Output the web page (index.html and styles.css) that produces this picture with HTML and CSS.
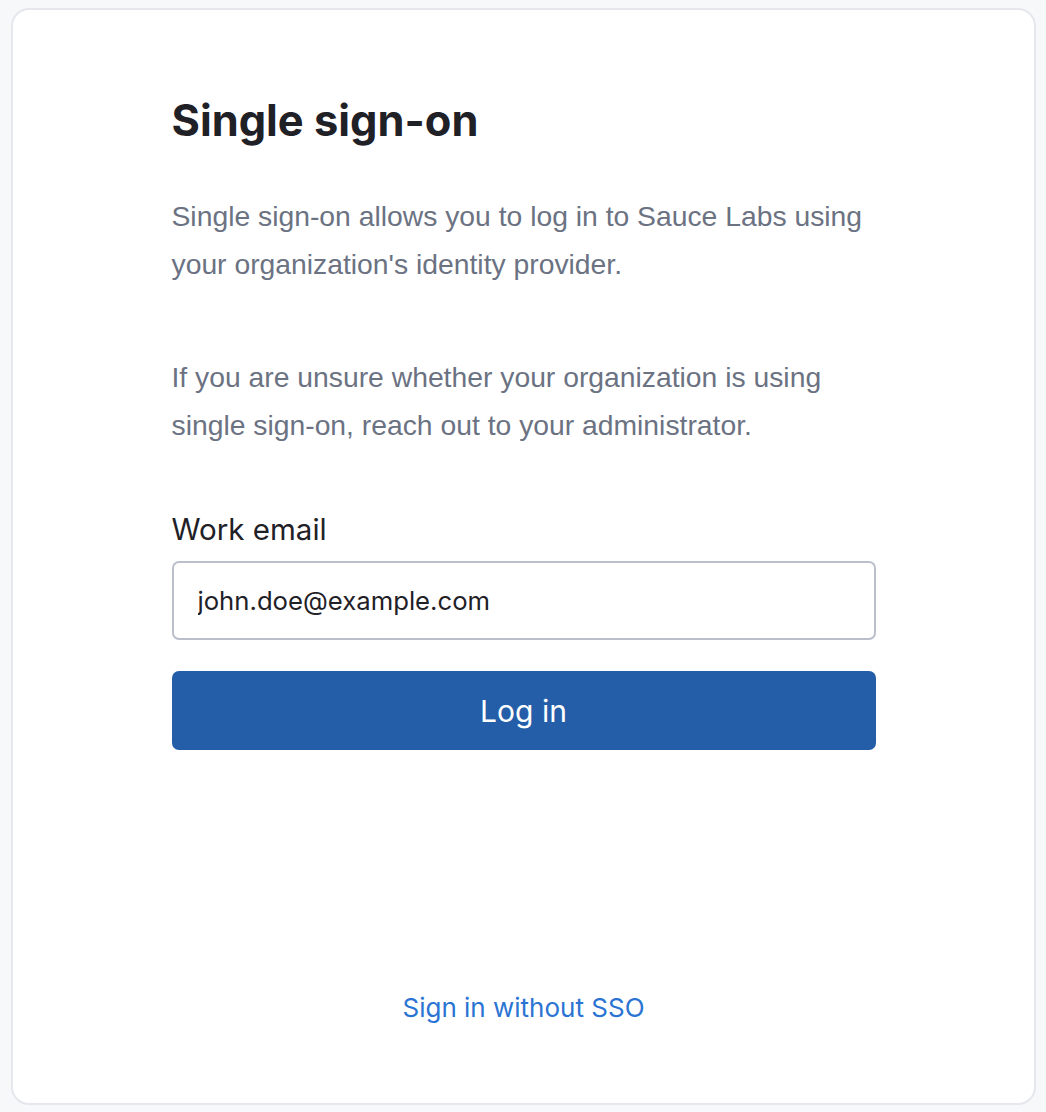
FILE: index.html
```html
<!DOCTYPE html>
<html>
<head>
<meta charset="utf-8">
<link rel="stylesheet" href="styles.css">
</head>
<body>
<main class="card">
  <div class="content">
    <h1 class="title">Single sign-on</h1>
    <p class="desc">Single sign-on allows you to log in to Sauce Labs using your organization's identity provider.</p>
    <p class="desc desc-second">If you are unsure whether your organization is using single sign-on, reach out to your administrator.</p>
    <form class="form">
      <label class="label" for="email">Work email</label>
      <input class="input" id="email" type="text" value="john.doe@example.com">
      <button class="button" type="button">Log in</button>
    </form>
  </div>
  <div class="footer">
    <a class="link" href="#">Sign in without SSO</a>
  </div>
</main>
</body>
</html>
```
FILE: styles.css
```css
html, body {
  margin: 0;
  padding: 0;
}
body {
  background: #f7f8fa;
  padding: 8px 10px 7px 11px;
  box-sizing: border-box;
  height: 1112px;
}
.card {
  box-sizing: border-box;
  height: 1097px;
  background: #ffffff;
  border: 2px solid #e6e7ec;
  border-radius: 18px;
  display: flex;
  flex-direction: column;
  align-items: center;
}
.content {
  width: 704px;
  padding-top: 84px;
}
.title {
  margin: 0;
  font-family: "Inter", "Lato", sans-serif;
  font-weight: 700;
  font-size: 43.4px;
  line-height: 52px;
  color: #1f2127;
}
.desc {
  margin: 46px 0 0;
  font-family: "Liberation Sans", Arial, sans-serif;
  font-size: 28.3px;
  line-height: 48px;
  color: #6b7282;
}
.desc-second {
  margin-top: 65px;
}
.form {
  margin-top: 62px;
  display: flex;
  flex-direction: column;
}
.label {
  font-family: "Inter", "Lato", sans-serif;
  font-size: 29.5px;
  line-height: 36px;
  color: #1f2127;
}
.input {
  margin-top: 14px;
  box-sizing: border-box;
  height: 79px;
  width: 100%;
  border: 2px solid #b9c0cc;
  border-radius: 7px;
  padding: 0 24px;
  font-family: "Inter", "Lato", sans-serif;
  font-size: 25.7px;
  color: #1f2127;
  background: #fff;
  outline: none;
}
.button {
  margin-top: 31px;
  height: 79px;
  width: 100%;
  border: none;
  border-radius: 7px;
  background: #245ea8;
  color: #ffffff;
  font-family: "Inter", "Lato", sans-serif;
  font-size: 30px;
  cursor: pointer;
}
.footer {
  margin-top: auto;
  padding-bottom: 80px;
}
.link {
  font-family: "Inter", "Lato", sans-serif;
  font-size: 26px;
  color: #2b74d3;
  text-decoration: none;
}
```
